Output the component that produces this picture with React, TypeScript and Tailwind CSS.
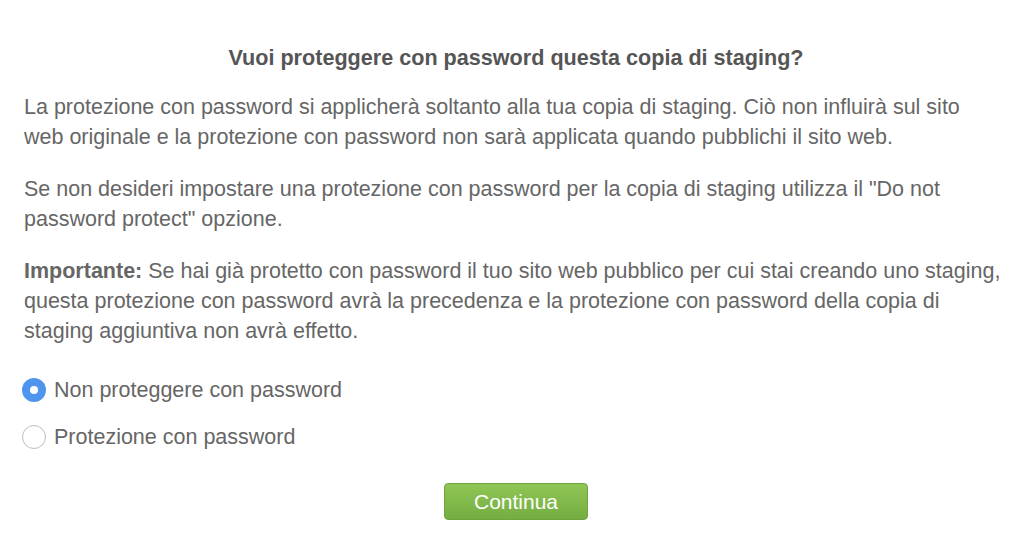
import { useState } from 'react';

export default function App() {
  const [choice, setChoice] = useState<'none' | 'protect'>('none');

  const options = [
    { id: 'none' as const, label: 'Non proteggere con password' },
    { id: 'protect' as const, label: 'Protezione con password' },
  ];

  return (
    <div className="min-h-screen bg-white font-['Liberation_Sans',Arial,sans-serif] text-[#666666]">
      <div className="pl-6 pr-4 pt-10">
        <h2 className="mb-4 text-center text-[21.6px] font-bold leading-[36px] text-[#555555]">
          Vuoi proteggere con password questa copia di staging?
        </h2>

        <div className="-mr-3 flex flex-col gap-[22px] text-[21.5px] leading-[30px]">
          <p>
            La protezione con password si applicherà soltanto alla tua copia di staging. Ciò non influirà sul sito
            <br />
            web originale e la protezione con password non sarà applicata quando pubblichi il sito web.
          </p>

          <p>
            Se non desideri impostare una protezione con password per la copia di staging utilizza il "Do not
            <br />
            password protect" opzione.
          </p>

          <p>
            <strong className="font-bold">Importante:</strong> Se hai già protetto con password il tuo sito web
            pubblico per cui stai creando uno staging,
            <br />
            questa protezione con password avrà la precedenza e la protezione con password della copia di
            <br />
            staging aggiuntiva non avrà effetto.
          </p>
        </div>

        <div className="mt-[29px] flex flex-col gap-[17px]">
          {options.map((opt) => {
            const active = choice === opt.id;
            return (
              <label
                key={opt.id}
                onClick={() => setChoice(opt.id)}
                className="-ml-[2px] flex cursor-pointer items-center gap-2 text-[21.5px] leading-[30px]"
              >
                {active ? (
                  <span className="flex h-6 w-6 items-center justify-center rounded-full bg-[#4f95ee]">
                    <span className="h-2 w-2 rounded-full bg-white" />
                  </span>
                ) : (
                  <span className="h-6 w-6 rounded-full border border-[#bdbdbd] bg-white" />
                )}
                <span>{opt.label}</span>
              </label>
            );
          })}
        </div>

        <div className="mt-[31px] flex justify-center">
          <button className="h-[37px] w-[144px] rounded-[4px] border border-[#6ea33e] bg-gradient-to-b from-[#8fc655] to-[#74ad40] text-[21px] text-white">
            Continua
          </button>
        </div>
      </div>
    </div>
  );
}
